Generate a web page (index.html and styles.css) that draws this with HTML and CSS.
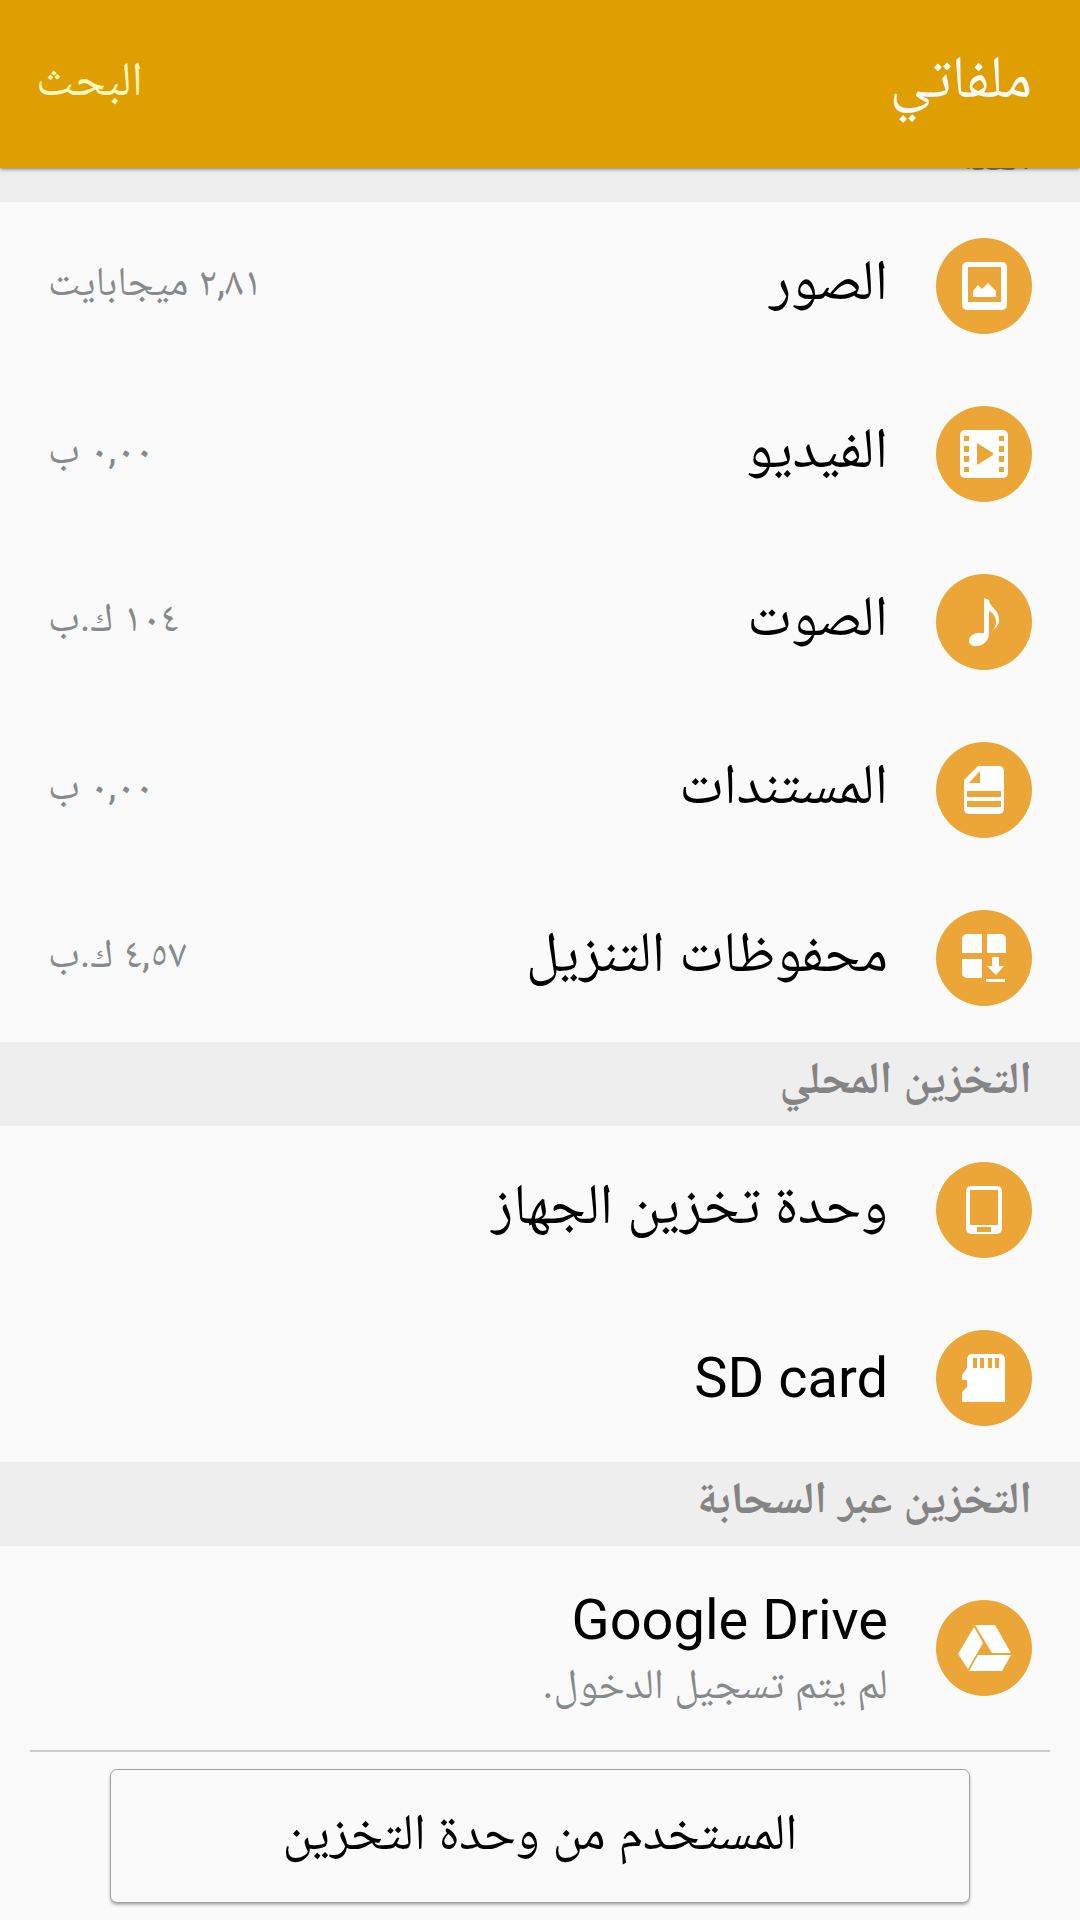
FILE: index.html
```html
<!DOCTYPE html>
<html lang="ar" dir="rtl">
<head>
    <meta charset="UTF-8">
    <meta name="viewport" content="width=device-width, initial-scale=1.0">
    <title>ملفاتي</title>
    <link rel="stylesheet" href="styles.css">
</head>
<body>
    <header class="app-bar">
        <h1 class="app-title">ملفاتي</h1>
        <button type="button" class="search-button">البحث</button>
    </header>

    <main>
        <h2 class="section-title scrolled">الفئة</h2>
        <ul class="file-list">
            <li>
                <a href="#images" class="file-row">
                    <svg class="icon" viewBox="0 0 96 96" aria-hidden="true">
                        <circle cx="48" cy="48" r="48"/>
                        <path class="glyph" fill-rule="evenodd" d="M31 24h35a5 5 0 0 1 5 5v38a5 5 0 0 1-5 5H31a5 5 0 0 1-5-5V29a5 5 0 0 1 5-5zM32 29v35h33V29z"/>
                        <path class="glyph" d="M37 59v-6l5-6 4 4 6-6 8 8v6z"/>
                    </svg>
                    <span class="name">الصور</span>
                    <span class="size">٢,٨١ ميجابايت</span>
                </a>
            </li>
            <li>
                <a href="#videos" class="file-row">
                    <svg class="icon" viewBox="0 0 96 96" aria-hidden="true">
                        <circle cx="48" cy="48" r="48"/>
                        <rect class="glyph" x="24" y="24" width="48" height="48" rx="5"/>
                        <path d="M28 30h5v5h-5zM28 40h5v6h-5zM28 50h5v6h-5zM28 61h5v5h-5zM63 30h5v5h-5zM63 40h5v6h-5zM63 50h5v6h-5zM63 61h5v5h-5z"/>
                        <path d="M41 37l16 10v2L41 59z"/>
                    </svg>
                    <span class="name">الفيديو</span>
                    <span class="size">٠,٠٠ ب</span>
                </a>
            </li>
            <li>
                <a href="#audio" class="file-row">
                    <svg class="icon" viewBox="0 0 96 96" aria-hidden="true">
                        <circle cx="48" cy="48" r="48"/>
                        <path class="glyph" d="M48 24l5 2c0 7 10 9 10 20 0 5-3 8-6 10 2-3 3-5 3-8 0-6-3-9-7-11v22c0 7-5 13-13 13-4 0-7-2-7-5 0-5 6-9 12-8h3z"/>
                    </svg>
                    <span class="name">الصوت</span>
                    <span class="size">١٠٤ ك.ب</span>
                </a>
            </li>
            <li>
                <a href="#documents" class="file-row">
                    <svg class="icon" viewBox="0 0 96 96" aria-hidden="true">
                        <circle cx="48" cy="48" r="48"/>
                        <path class="glyph" d="M42 24h21a5 5 0 0 1 5 5v38a5 5 0 0 1-5 5H33a5 5 0 0 1-5-5V38z"/>
                        <path d="M44 29v12H33zM31 49h34v6H31zM31 59h34v6H31z"/>
                    </svg>
                    <span class="name">المستندات</span>
                    <span class="size">٠,٠٠ ب</span>
                </a>
            </li>
            <li>
                <a href="#downloads" class="file-row">
                    <svg class="icon" viewBox="0 0 96 96" aria-hidden="true">
                        <circle cx="48" cy="48" r="48"/>
                        <path class="glyph" d="M46 24v19H26V29a5 5 0 0 1 5-5zM51 24h14a5 5 0 0 1 5 5v14H51zM26 49h20v19H31a5 5 0 0 1-5-5zM56 47h7v9h5l-8 9-9-9h5zM50 69h19v3H50z"/>
                    </svg>
                    <span class="name">محفوظات التنزيل</span>
                    <span class="size">٤,٥٧ ك.ب</span>
                </a>
            </li>
        </ul>

        <h2 class="section-title">التخزين المحلي</h2>
        <ul class="file-list">
            <li>
                <a href="#device" class="file-row">
                    <svg class="icon" viewBox="0 0 96 96" aria-hidden="true">
                        <circle cx="48" cy="48" r="48"/>
                        <rect class="glyph" x="30" y="24" width="36" height="48" rx="5"/>
                        <path d="M34 28h28v35H34zM41 65h14v5H41z"/>
                    </svg>
                    <span class="name">وحدة تخزين الجهاز</span>
                </a>
            </li>
            <li>
                <a href="#sdcard" class="file-row">
                    <svg class="icon" viewBox="0 0 96 96" aria-hidden="true">
                        <circle cx="48" cy="48" r="48"/>
                        <path class="glyph" d="M36 24h28a5 5 0 0 1 5 5v43H26V62l5-5v-7h-5v-5l5-7V29a5 5 0 0 1 5-5z"/>
                        <path d="M37 28h4v10h-4zM44 28h4v10h-4zM52 28h4v10h-4zM59 28h4v10h-4z"/>
                    </svg>
                    <span class="name latin" lang="en">SD card</span>
                </a>
            </li>
        </ul>

        <h2 class="section-title">التخزين عبر السحابة</h2>
        <ul class="file-list">
            <li>
                <a href="#drive" class="file-row cloud">
                    <svg class="icon" viewBox="0 0 96 96" aria-hidden="true">
                        <circle cx="48" cy="48" r="48"/>
                        <path class="glyph" d="M39 25h20l16 28H56zM38 27l9 16-15 26-10-15zM42 55h33l-9 16H33z"/>
                    </svg>
                    <span class="name latin">
                        <span lang="en">Google Drive</span>
                        <small class="status">لم يتم تسجيل الدخول.</small>
                    </span>
                </a>
            </li>
        </ul>
    </main>

    <footer class="bottom-bar">
        <button type="button" class="usage-button">المستخدم من وحدة التخزين</button>
    </footer>
</body>
</html>
```
FILE: styles.css
```css
* {
    box-sizing: border-box;
}
body {
    margin: 0;
    font-family: Roboto, "Noto Naskh Arabic", "DejaVu Sans", sans-serif;
    background-color: #fafafa;
    color: #000;
}
.app-bar {
    position: sticky;
    top: 0;
    z-index: 1;
    display: flex;
    align-items: center;
    justify-content: space-between;
    height: 168px;
    padding: 0 48px 0 36px;
    background-color: #e09f00;
    box-shadow: 0 1px 4px rgba(0, 0, 0, 0.5);
}
.app-title {
    margin: 0;
    font-size: 60px;
    font-weight: normal;
    color: #fafafa;
}
.search-button {
    padding: 0;
    border: 0;
    background: none;
    font-family: inherit;
    font-size: 48px;
    color: #fff7c0;
}
.section-title {
    display: flex;
    align-items: center;
    height: 84px;
    margin: 0;
    padding: 0 48px 2px;
    font-size: 45px;
    background-color: #eee;
    color: #848484;
}
/* first heading is mostly scrolled under the app bar */
.scrolled {
    margin-top: -50px;
    padding-bottom: 0;
}
.file-list {
    margin: 0;
    padding: 0;
    list-style: none;
}
.file-row {
    display: flex;
    align-items: center;
    gap: 48px;
    height: 168px;
    padding: 0 48px;
    color: #000;
    text-decoration: none;
}
.file-row.cloud {
    height: 204px;
}
.icon {
    flex: none;
    width: 96px;
    height: 96px;
    fill: #eba637;
}
.glyph {
    fill: #fff;
}
.name {
    display: flex;
    flex: 1;
    flex-direction: column;
    padding-bottom: 12px;
    font-size: 57px;
    line-height: 64px;
}
.name.latin {
    padding-bottom: 0;
    font-size: 56px;
}
.cloud .name {
    padding-top: 8px;
}
.status {
    font-size: 42px;
    color: #878a8c;
}
.size {
    font-size: 41px;
    color: #878a8c;
}
.bottom-bar {
    display: flex;
    justify-content: center;
    margin: 0 30px;
    padding: 17px 80px;
    border-top: 2px solid #ccc;
}
.usage-button {
    flex: 1;
    height: 134px;
    padding: 2px 0 0;
    border: 1px solid #a0a0a0;
    border-radius: 7px;
    background-color: #fafafa;
    box-shadow: 0 2px 3px rgba(0, 0, 0, 0.3);
    font-family: inherit;
    font-size: 51px;
    color: #000;
}
```
